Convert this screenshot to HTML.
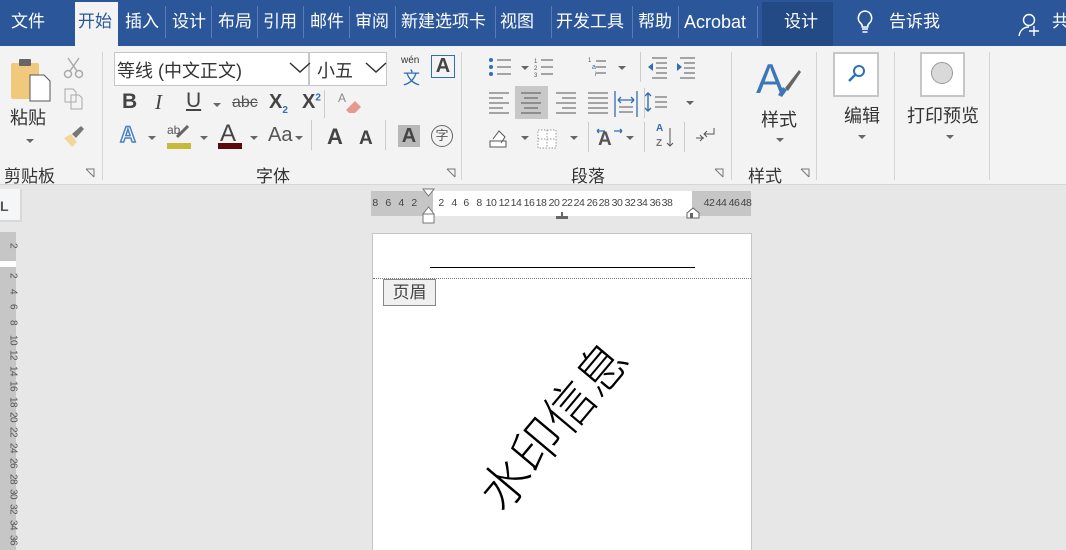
<!DOCTYPE html>
<html style="overflow:hidden;width:1066px;height:550px"><head><meta charset="utf-8"><style>
*{margin:0;padding:0;box-sizing:border-box}
body{width:1066px;height:550px;overflow:hidden;background:#e6e7e6;font-family:"Liberation Sans","Noto Sans CJK SC",sans-serif;position:relative}
.a{position:absolute;white-space:nowrap}
.tb{position:absolute;left:0;top:0;width:1066px;height:46px;background:#2b579a}
.tab{position:absolute;top:11px;color:#fff;font-size:17px;line-height:22px}
.sep{position:absolute;top:6px;width:1px;height:32px;background:#5a7db5}
.rib{position:absolute;left:0;top:46px;width:1066px;height:139px;background:#f3f3f3;border-bottom:1px solid #d6d6d6}
.vs{position:absolute;top:52px;width:1px;height:128px;background:#d3d3d3}
.g{position:absolute;color:#333;font-size:17px;white-space:nowrap}
.dd{position:absolute;width:0;height:0;border-left:4px solid transparent;border-right:4px solid transparent;border-top:4px solid #666}
.hr span{position:absolute;top:0;font-size:10.5px;color:#444;transform:translateX(-50%);letter-spacing:-0.5px}
.vr span{position:absolute;left:13px;font-size:10px;color:#555;transform:translateY(-50%) rotate(90deg);transform-origin:0 50%;letter-spacing:-0.5px}
</style></head><body>
<div class="tb"></div>
<div class="a" style="left:75px;top:2px;width:43px;height:44px;background:#f3f3f3"></div>
<div class="a" style="left:762px;top:2px;width:71px;height:44px;background:#234a85"></div>
<div class="tab" style="left:11px">文件</div>
<div class="tab" style="left:78px;color:#2b579a">开始</div>
<div class="tab" style="left:125px">插入</div><div class="sep" style="left:165px"></div>
<div class="tab" style="left:172px">设计</div><div class="sep" style="left:211px"></div>
<div class="tab" style="left:218px">布局</div><div class="sep" style="left:257px"></div>
<div class="tab" style="left:263px">引用</div><div class="sep" style="left:303px"></div>
<div class="tab" style="left:310px">邮件</div><div class="sep" style="left:349px"></div>
<div class="tab" style="left:355px">审阅</div><div class="sep" style="left:395px"></div>
<div class="tab" style="left:401px">新建选项卡</div><div class="sep" style="left:495px"></div>
<div class="tab" style="left:500px">视图</div><div class="sep" style="left:551px"></div>
<div class="tab" style="left:556px">开发工具</div><div class="sep" style="left:632px"></div>
<div class="tab" style="left:638px">帮助</div><div class="sep" style="left:678px"></div>
<div class="tab" style="left:684px;font-size:18px">Acrobat</div><div class="sep" style="left:757px"></div>
<div class="tab" style="left:784px">设计</div>
<svg class="a" style="left:856px;top:10px" width="18" height="26" viewBox="0 0 18 26"><path d="M9 1a7 7 0 0 0-4 12.5c1 1 1.3 2 1.3 3.5h5.4c0-1.5.3-2.5 1.3-3.5A7 7 0 0 0 9 1zM6 19h6M6.5 22h5" fill="none" stroke="#fff" stroke-width="1.6"/></svg>
<div class="tab" style="left:889px">告诉我</div>
<svg class="a" style="left:1018px;top:12px" width="24" height="26" viewBox="0 0 24 26"><circle cx="11" cy="8" r="5.5" fill="none" stroke="#fff" stroke-width="1.4"/><path d="M1 24c1-6 5-9 10-9M16 14v10M11 19h10" fill="none" stroke="#fff" stroke-width="1.4"/></svg>
<div class="tab" style="left:1052px">共</div>

<div class="rib"></div>
<div class="vs" style="left:102px"></div><div class="vs" style="left:461px"></div><div class="vs" style="left:731px"></div><div class="vs" style="left:816px"></div><div class="vs" style="left:894px"></div><div class="vs" style="left:989px"></div>

<svg class="a" style="left:9px;top:57px" width="44" height="46" viewBox="0 0 44 46"><rect x="2" y="6" width="28" height="36" rx="2" fill="#f0c97c"/><rect x="10" y="2" width="12" height="7" rx="1" fill="#666"/><path d="M21 18h14l6 6v20H21z" fill="#fff" stroke="#555"/></svg>
<div class="g" style="left:10px;top:104px;font-size:18px">粘贴</div>
<div class="dd" style="left:26px;top:139px"></div>
<svg class="a" style="left:62px;top:55px" width="24" height="26" viewBox="0 0 24 26"><circle cx="6" cy="19" r="3.5" fill="none" stroke="#aaa" stroke-width="1.5"/><circle cx="17" cy="19" r="3.5" fill="none" stroke="#aaa" stroke-width="1.5"/><path d="M8 16L17 3M15 16L6 3" stroke="#aaa" stroke-width="1.5"/></svg>
<svg class="a" style="left:64px;top:88px" width="20" height="22" viewBox="0 0 20 22"><path d="M1 1h8l3 3v10H1zM7 7h8l3 3v11H7z" fill="#f3f3f3" stroke="#aaa"/></svg>
<svg class="a" style="left:62px;top:124px" width="24" height="24" viewBox="0 0 24 24"><path d="M2 14l7-4 6 8-5 5z" fill="#f3d79a"/><path d="M10 10l9-8 3 3-8 9z" fill="#777"/></svg>
<div class="g" style="left:4px;top:162px">剪贴板</div>
<svg class="a" style="left:85px;top:168px" width="10" height="10"><path d="M1 1h8v8M1 1l8 8" fill="none" stroke="#777"/></svg>

<div class="a" style="left:114px;top:52px;width:195px;height:34px;background:#fff;border:1px solid #c6c6c6"></div>
<div class="a" style="left:309px;top:52px;width:78px;height:34px;background:#fff;border:1px solid #c6c6c6"></div>
<div class="g" style="left:117px;top:57px;font-size:18px">等线 (中文正文)</div>
<div class="g" style="left:317px;top:57px;font-size:18px">小五</div>
<svg class="a" style="left:289px;top:62px" width="22" height="12"><path d="M1 1l10 9 10-9" fill="none" stroke="#333" stroke-width="1.5"/></svg>
<svg class="a" style="left:365px;top:62px" width="22" height="12"><path d="M1 1l10 9 10-9" fill="none" stroke="#333" stroke-width="1.5"/></svg>
<div class="a" style="left:401px;top:55px;font-size:10px;color:#333">wén</div>
<div class="a" style="left:403px;top:64px;font-size:17px;color:#2f6fb5">文</div>
<div class="a" style="left:431px;top:55px;width:24px;height:23px;border:1px solid #2f6fb5;font-size:20px;font-weight:bold;color:#444;text-align:center;line-height:21px">A</div>
<div class="a" style="left:122px;top:90px;font-size:21px;font-weight:bold;color:#444">B</div>
<div class="a" style="left:155px;top:90px;font-size:21px;font-style:italic;font-family:'Liberation Serif',serif;color:#444">I</div>
<div class="a" style="left:186px;top:89px;font-size:21px;text-decoration:underline;color:#444">U</div>
<div class="dd" style="left:213px;top:103px"></div>
<div class="a" style="left:232px;top:94px;font-size:16px;text-decoration:line-through;color:#555">abc</div>
<div class="a" style="left:269px;top:91px;font-size:20px;font-weight:bold;color:#444">X<sub style="font-size:10px;color:#2f6fb5">2</sub></div>
<div class="a" style="left:302px;top:91px;font-size:20px;font-weight:bold;color:#444">X<sup style="font-size:10px;color:#2f6fb5">2</sup></div>
<div class="a" style="left:324px;top:90px;width:1px;height:28px;background:#ccc"></div>
<svg class="a" style="left:336px;top:90px" width="28" height="26"><text x="2" y="12" font-size="12" fill="#888" font-family="Liberation Sans">A</text><path d="M10 20l9-9 6 6-6 6h-6z" fill="#e49a8c"/></svg>
<div class="a" style="left:120px;top:122px;font-size:22px;color:#fff;-webkit-text-stroke:1.5px #4a80c0;font-weight:bold">A</div>
<div class="dd" style="left:148px;top:136px"></div>
<div class="a" style="left:167px;top:123px;font-size:12px;color:#555">ab</div>
<svg class="a" style="left:175px;top:125px" width="14" height="14"><path d="M2 12L13 1" stroke="#666" stroke-width="3"/></svg>
<div class="a" style="left:167px;top:143px;width:24px;height:6px;background:#c8b93a"></div>
<div class="dd" style="left:200px;top:136px"></div>
<div class="a" style="left:220px;top:120px;font-size:24px;color:#444">A</div>
<div class="a" style="left:218px;top:143px;width:24px;height:6px;background:#5a0a0a"></div>
<div class="dd" style="left:250px;top:136px"></div>
<div class="a" style="left:268px;top:124px;font-size:20px;color:#555">Aa</div>
<div class="dd" style="left:295px;top:136px"></div>
<div class="a" style="left:311px;top:120px;width:1px;height:30px;background:#ccc"></div>
<div class="a" style="left:327px;top:124px;font-size:22px;color:#444;font-weight:bold">A</div>
<div class="a" style="left:359px;top:128px;font-size:19px;color:#444;font-weight:bold">A</div>
<div class="a" style="left:385px;top:120px;width:1px;height:30px;background:#ccc"></div>
<div class="a" style="left:398px;top:125px;width:22px;height:22px;background:#b8b8b8;font-size:20px;font-weight:bold;color:#444;text-align:center;line-height:22px">A</div>
<div class="a" style="left:431px;top:125px;width:22px;height:22px;border:1.5px solid #666;border-radius:50%;font-size:13px;color:#555;text-align:center;line-height:19px">字</div>
<div class="g" style="left:256px;top:162px">字体</div>
<svg class="a" style="left:446px;top:168px" width="10" height="10"><path d="M1 1h8v8M1 1l8 8" fill="none" stroke="#777"/></svg>

<svg class="a" style="left:484px;top:55px" width="260" height="100">
<g fill="#2f6fb5"><circle cx="7" cy="5" r="2"/><circle cx="7" cy="12" r="2"/><circle cx="7" cy="19" r="2"/></g>
<g stroke="#555"><path d="M13 5h14M13 12h14M13 19h14M57 5h12M57 12h12M57 19h12M112 6h10M112 12h10M112 18h10"/></g>
<text x="50" y="8" font-size="6" fill="#555">1</text><text x="50" y="15" font-size="6" fill="#555">2</text><text x="50" y="22" font-size="6" fill="#555">3</text>
<text x="104" y="7" font-size="6" fill="#555">1</text><text x="108" y="14" font-size="7" fill="#2f6fb5">a</text><text x="111" y="21" font-size="6" fill="#555">i</text>
<g stroke="#555"><path d="M168 3h15M172 8h11M172 13h11M172 18h11M168 23h15M196 3h15M200 8h11M200 13h11M200 18h11M196 23h15"/></g>
<path d="M164 12l5-4v8z M193 8l5 4-5 4z" fill="#2f6fb5"/>
<g stroke="#555"><path d="M5 38h20M5 43h14M5 48h20M5 53h14M5 58h20"/></g>
<rect x="31" y="31" width="33" height="33" fill="#c8c8c8"/>
<g stroke="#555"><path d="M37 38h20M40 43h14M37 48h20M40 53h14M37 58h20M72 38h20M78 43h14M72 48h20M78 53h14M72 58h20M104 38h20M104 43h20M104 48h20M104 53h20M104 58h20"/></g>
<g stroke="#2f6fb5" stroke-width="1.3"><path d="M131 36v26M153 36v26M134 45h16M134 45l3-3M134 45l3 3M150 45l-3-3M150 45l-3 3"/></g>
<path d="M135 52h14M135 57h14" stroke="#555"/>
<path d="M164 38l0 18M161 41l3-3 3 3M161 53l3 3 3-3" stroke="#2f6fb5" stroke-width="1.4" fill="none"/>
<path d="M171 42h12M171 47h12M171 52h12" stroke="#555"/>
<path d="M6 86h16v6H6zM9 84l6-8 6 6-4 6" fill="#fff" stroke="#555"/>
<rect x="54" y="75" width="18" height="18" fill="#fff" stroke="#999" stroke-dasharray="1.5 1.5"/>
<path d="M63 75v18M54 84h18" stroke="#999" stroke-dasharray="1.5 1.5"/>
<text x="114" y="90" font-size="19" font-weight="bold" fill="#555" font-family="Liberation Sans">A</text>
<path d="M113 76h8M113 76l2-2M113 76l2 2M130 76h8M138 76l-2-2M138 76l-2 2" stroke="#2f6fb5" stroke-width="1.3"/>
<text x="172" y="76" font-size="10" font-weight="bold" fill="#2f6fb5" font-family="Liberation Sans">A</text>
<text x="172" y="91" font-size="10" font-weight="bold" fill="#777" font-family="Liberation Sans">Z</text>
<path d="M186 73v18M183 88l3 3 3-3" stroke="#555" fill="none"/>
<path d="M230 73v6h-10M223 76l-3 3 3 3M212 83h8M216 80l3 3-3 3" stroke="#555" fill="none"/>
</svg>
<div class="dd" style="left:521px;top:66px"></div><div class="dd" style="left:618px;top:66px"></div><div class="dd" style="left:686px;top:101px"></div><div class="dd" style="left:521px;top:136px"></div><div class="dd" style="left:570px;top:136px"></div><div class="dd" style="left:626px;top:136px"></div>
<div class="a" style="left:640px;top:52px;width:1px;height:30px;background:#ccc"></div>
<div class="a" style="left:644px;top:88px;width:1px;height:30px;background:#ccc"></div>
<div class="a" style="left:588px;top:122px;width:1px;height:30px;background:#ccc"></div>
<div class="a" style="left:644px;top:122px;width:1px;height:30px;background:#ccc"></div>
<div class="a" style="left:684px;top:122px;width:1px;height:30px;background:#ccc"></div>
<div class="g" style="left:571px;top:162px">段落</div>
<svg class="a" style="left:714px;top:168px" width="10" height="10"><path d="M1 1h8v8M1 1l8 8" fill="none" stroke="#777"/></svg>

<svg class="a" style="left:754px;top:55px" width="48" height="46" viewBox="0 0 48 46"><text x="2" y="38" font-size="42" fill="#3c78b8" font-family="Liberation Sans">A</text><path d="M24 40l5-8 4 3-5 7z" fill="#3c78b8"/><path d="M31 33l14-18 2 2-13 19z" fill="#666"/></svg>
<div class="g" style="left:761px;top:106px;font-size:18px">样式</div>
<div class="dd" style="left:776px;top:138px"></div>
<div class="g" style="left:748px;top:162px">样式</div>
<svg class="a" style="left:800px;top:168px" width="10" height="10"><path d="M1 1h8v8M1 1l8 8" fill="none" stroke="#777"/></svg>

<div class="a" style="left:833px;top:52px;width:46px;height:45px;background:#fff;border:2px solid #c6c6c6"></div>
<svg class="a" style="left:846px;top:63px" width="22" height="22"><circle cx="13" cy="8" r="5" fill="none" stroke="#2f6fb5" stroke-width="2"/><path d="M9 12l-6 6" stroke="#2f6fb5" stroke-width="2.5"/></svg>
<div class="g" style="left:844px;top:102px;font-size:18px">编辑</div>
<div class="dd" style="left:858px;top:135px"></div>

<div class="a" style="left:920px;top:52px;width:45px;height:45px;background:#fff;border:2px solid #c6c6c6"></div>
<div class="a" style="left:931px;top:62px;width:22px;height:22px;background:#d9d9d9;border:1.5px solid #999;border-radius:50%"></div>
<div class="g" style="left:907px;top:102px;font-size:18px">打印预览</div>
<div class="dd" style="left:946px;top:135px"></div>

<div class="a" style="left:0;top:189px;width:22px;height:33px;background:#f5f6f7;border-right:2px solid #d8d8d8;border-bottom:2px solid #d8d8d8"></div>
<div class="a" style="left:0;top:198px;font-size:14px;font-weight:bold;color:#555">L</div>
<div class="a" style="left:371px;top:191px;width:62px;height:25px;background:#c6c6c6"></div>
<div class="a" style="left:433px;top:191px;width:259px;height:25px;background:#fff"></div>
<div class="a" style="left:692px;top:191px;width:59px;height:25px;background:#c6c6c6"></div>
<div class="a hr" style="left:0;top:197px;width:1066px;height:14px">
<span style="left:375px">8</span><span style="left:388px">6</span><span style="left:401px">4</span><span style="left:414px">2</span>
<span style="left:441px">2</span><span style="left:454px">4</span><span style="left:466px">6</span><span style="left:479px">8</span>
<span style="left:491px">10</span><span style="left:504px">12</span><span style="left:516px">14</span><span style="left:529px">16</span><span style="left:541px">18</span><span style="left:554px">20</span><span style="left:567px">22</span><span style="left:579px">24</span><span style="left:592px">26</span><span style="left:604px">28</span><span style="left:617px">30</span><span style="left:630px">32</span><span style="left:642px">34</span><span style="left:655px">36</span><span style="left:667px">38</span>
<span style="left:709px">42</span><span style="left:721px">44</span><span style="left:734px">46</span><span style="left:746px">48</span>
</div>
<svg class="a" style="left:421px;top:187px" width="16" height="40"><path d="M2 2h11l-5.5 7zM7.5 20l5.5 7H2z" fill="#fff" stroke="#777"/><rect x="2" y="27" width="11" height="9" fill="#fff" stroke="#777"/></svg>
<svg class="a" style="left:555px;top:212px" width="14" height="8"><path d="M6 0h2v4h5v3H1V4h5z" fill="#666"/></svg>
<svg class="a" style="left:686px;top:207px" width="14" height="12"><path d="M1 11V6l6-5 6 5v5z" fill="#fff" stroke="#666"/><rect x="4" y="6" width="3" height="5" fill="#666"/></svg>

<div class="a" style="left:0;top:232px;width:16px;height:318px;background:#c6c6c6"></div>
<div class="a" style="left:0;top:261px;width:16px;height:6px;background:#fff"></div>
<div class="a vr" style="left:0;top:0;width:16px;height:550px">
<span style="top:243px">2</span>
<span style="top:273px">2</span><span style="top:289px">4</span><span style="top:304px">6</span><span style="top:320px">8</span>
<span style="top:335px">10</span><span style="top:350px">12</span><span style="top:366px">14</span><span style="top:381px">16</span><span style="top:397px">18</span><span style="top:412px">20</span><span style="top:427px">22</span><span style="top:443px">24</span><span style="top:458px">26</span><span style="top:474px">28</span><span style="top:489px">30</span><span style="top:504px">32</span><span style="top:520px">34</span><span style="top:535px">36</span><span style="top:550px">38</span>
</div>

<div class="a" style="left:372px;top:233px;width:380px;height:330px;background:#fff;border:1px solid #c6c6c6"></div>
<div class="a" style="left:430px;top:267px;width:265px;height:1px;background:#000"></div>
<div class="a" style="left:373px;top:278px;width:378px;border-top:1px dotted #777"></div>
<div class="a" style="left:383px;top:279px;width:53px;height:27px;background:#f0f0f0;border:1px solid #888;font-size:17px;color:#444;text-align:center;line-height:25px">页眉</div>
<div class="a" style="left:551px;top:424px;font-size:50px;color:#000;font-family:'Noto Sans CJK SC',sans-serif;transform:translate(-50%,-50%) rotate(-50deg);line-height:1;font-weight:300">水印信息</div>
</body></html>
